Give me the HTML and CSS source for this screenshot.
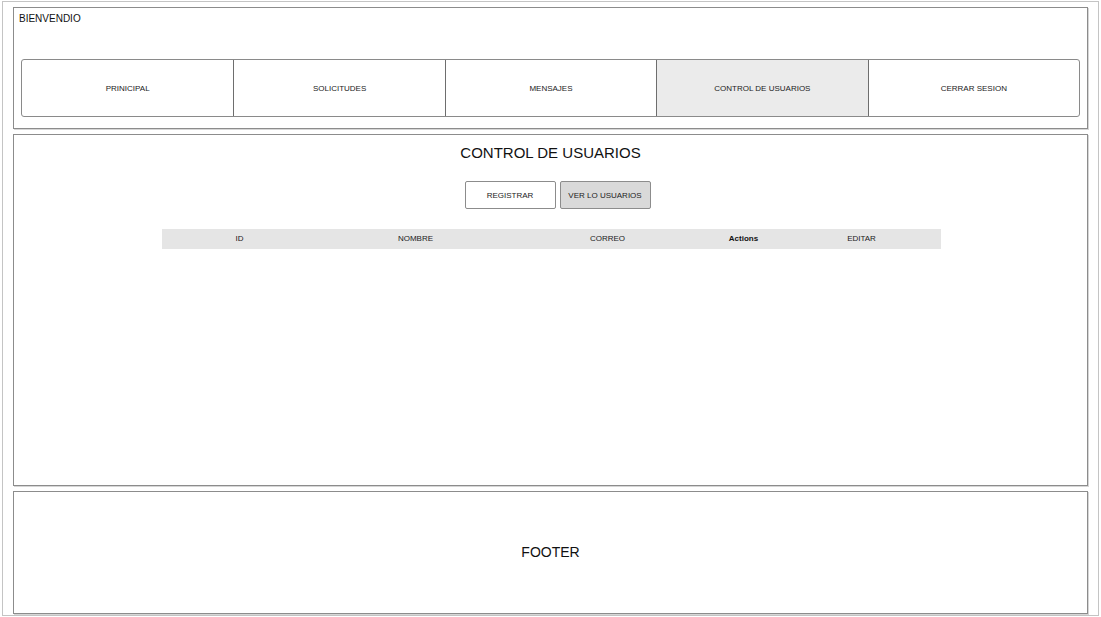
FILE: index.html
```html
<!DOCTYPE html>
<html lang="es">
<head>
<meta charset="utf-8">
<title>Control de usuarios</title>
<link rel="stylesheet" href="styles.css">
</head>
<body>
<div class="page">
  <header class="header">
    <div class="welcome">BIENVENDIO</div>
    <nav class="nav">
      <a class="nav-item">PRINICIPAL</a>
      <a class="nav-item">SOLICITUDES</a>
      <a class="nav-item">MENSAJES</a>
      <a class="nav-item active">CONTROL DE USUARIOS</a>
      <a class="nav-item">CERRAR SESION</a>
    </nav>
  </header>
  <main class="main">
    <h1 class="title">CONTROL DE USUARIOS</h1>
    <div class="actions">
      <button class="btn">REGISTRAR</button>
      <button class="btn btn-active">VER LO USUARIOS</button>
    </div>
    <div class="table">
      <div class="th">ID</div>
      <div class="th">NOMBRE</div>
      <div class="th">CORREO</div>
      <div class="th bold">Actions</div>
      <div class="th">EDITAR</div>
    </div>
  </main>
  <footer class="footer">FOOTER</footer>
</div>
</body>
</html>
```
FILE: styles.css
```css
* { box-sizing: border-box; }
html, body { margin: 0; padding: 0; background: #fff; }
body { font-family: "Liberation Sans", Arial, sans-serif; color: #111; }

.page {
  margin: 1px 0 0 2px;
  width: 1097px;
  height: 615px;
  border: 1px solid #c4c4c4;
  padding: 5px 10px 1px 10px;
  display: flex;
  flex-direction: column;
  gap: 5px;
}

.header, .main, .footer {
  border: 1px solid #8c8c8c;
  box-shadow: 1px 1px 0 #d6d6d6;
  background: #fff;
}

.header {
  height: 122px;
  padding: 5px 7px 0 7px;
  display: flex;
  flex-direction: column;
}
.welcome {
  font-size: 10px;
  line-height: 12px;
  color: #111;
  margin-left: -2px;
}
.nav {
  margin-top: 34px;
  height: 58px;
  display: grid;
  grid-template-columns: repeat(5, 1fr);
  border: 1px solid #8a8a8a;
  border-radius: 3px;
  overflow: hidden;
}
.nav-item {
  display: flex;
  align-items: center;
  justify-content: center;
  font-size: 8px;
  color: #222;
  border-left: 1px solid #6e6e6e;
}
.nav-item:first-child { border-left: none; }
.nav-item.active { background: #ebebeb; }

.main {
  height: 352px;
  display: flex;
  flex-direction: column;
  align-items: center;
}
.title {
  margin: 8px 0 0 0;
  font-size: 15px;
  font-weight: normal;
  line-height: 20px;
  color: #111;
}
.actions {
  margin-top: 18px;
  margin-left: 14px;
  display: flex;
  gap: 4px;
}
.btn {
  width: 91px;
  height: 28px;
  font-family: "Liberation Sans", Arial, sans-serif;
  font-size: 8px;
  color: #222;
  background: #fff;
  border: 1px solid #8c8c8c;
  border-radius: 2px;
  padding: 0;
}
.btn-active { background: #d9d9d9; }

.table {
  margin-top: 20px;
  margin-left: 1px;
  width: 779px;
  height: 20px;
  background: #e5e5e5;
  display: grid;
  grid-template-columns: 156px 196px 188px 84px 152px;
}
.th {
  display: flex;
  align-items: center;
  justify-content: center;
  padding-bottom: 2px;
  font-size: 8px;
  color: #1a1a1a;
}
.th.bold { font-weight: bold; color: #111; }

.footer {
  flex: 1;
  display: flex;
  align-items: center;
  justify-content: center;
  padding-bottom: 2px;
  font-size: 14px;
  color: #111;
}
```
